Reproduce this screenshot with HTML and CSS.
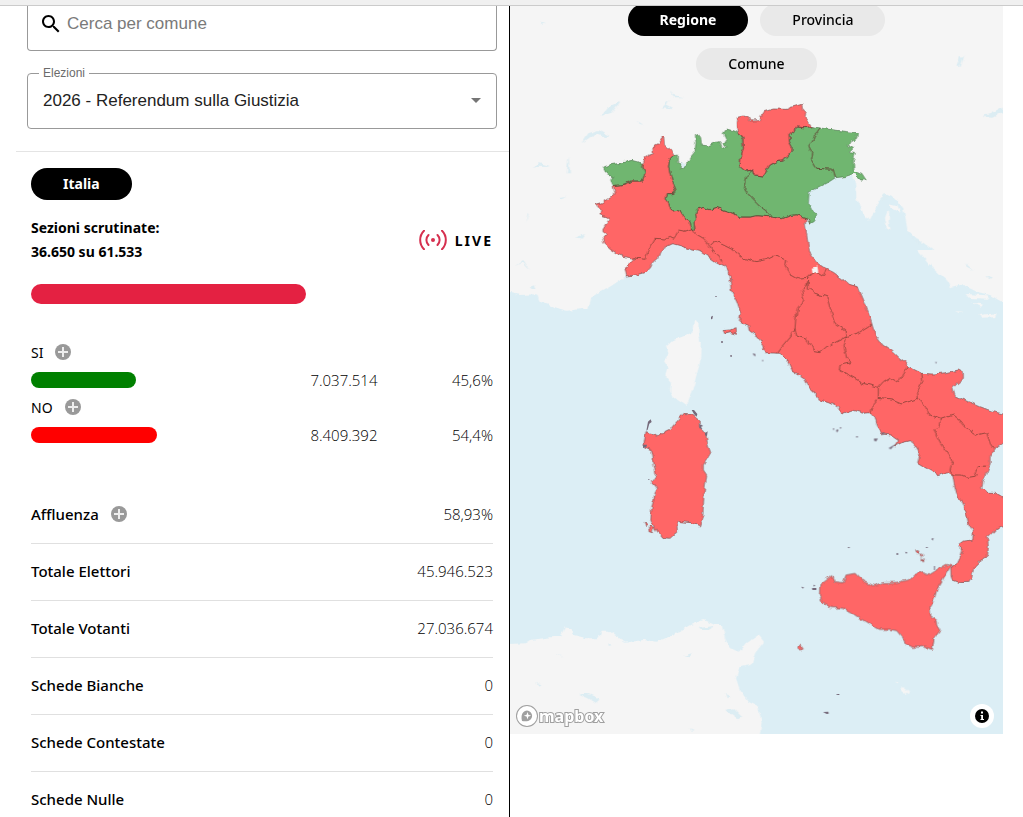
FILE: index.html
```html
<!DOCTYPE html>
<html lang="it">
<head>
  <meta charset="UTF-8">
  <meta name="viewport" content="width=device-width, initial-scale=1">
  <title>Referendum sulla Giustizia</title>
  <link rel="stylesheet" href="styles.css">
</head>
<body>
  <div class="topbar"></div>

  <main class="layout">
    <!-- Left: filters and results -->
    <section class="panel">
      <form class="filters">
        <div class="search">
          <svg class="search-icon" viewBox="0 0 24 24" aria-hidden="true">
            <path d="M15.5 14h-.79l-.28-.27C15.41 12.59 16 11.11 16 9.5 16 5.91 13.09 3 9.5 3S3 5.91 3 9.5 5.91 16 9.5 16c1.61 0 3.09-.59 4.23-1.57l.27.28v.79l5 4.99L20.49 19l-4.99-5zm-6 0C7.01 14 5 11.99 5 9.5S7.01 5 9.5 5 14 7.01 14 9.5 11.99 14 9.5 14z"/>
          </svg>
          <input type="text" placeholder="Cerca per comune" aria-label="Cerca per comune">
        </div>
        <fieldset class="select-box">
          <legend><label for="elezioni">Elezioni</label></legend>
          <select id="elezioni">
            <option>2026 - Referendum sulla Giustizia</option>
          </select>
          <svg class="arrow" viewBox="0 0 24 24" aria-hidden="true"><path d="M7 10l5 5 5-5z"/></svg>
        </fieldset>
      </form>

      <div class="results">
        <button type="button" class="pill active area">Italia</button>

        <div class="status">
          <p class="sections">Sezioni scrutinate:<br>36.650 su 61.533</p>
          <p class="live">
            <svg viewBox="0 0 28 20" aria-hidden="true">
              <circle cx="14" cy="10" r="2"/>
              <path d="M9.500 5a7 7 0 0 0 0 10M18.500 5a7 7 0 0 1 0 10M5 .8a13 13 0 0 0 0 18.400M23 .8a13 13 0 0 1 0 18.400"/>
            </svg>
            LIVE
          </p>
        </div>
        <div class="progress"><div class="progress-fill" style="width: 59.56%"></div></div>

        <div class="votes">
          <div class="vote">
            <div class="vote-name">SI
              <button type="button" class="plus" aria-label="Dettagli SI"><svg viewBox="0 0 16 16"><path d="M8 3v10M3 8h10"/></svg></button>
            </div>
            <div class="vote-row">
              <div><div class="bar yes" style="width: 45.6%"></div></div>
              <span class="number">7.037.514</span>
              <span class="number">45,6%</span>
            </div>
          </div>
          <div class="vote">
            <div class="vote-name">NO
              <button type="button" class="plus" aria-label="Dettagli NO"><svg viewBox="0 0 16 16"><path d="M8 3v10M3 8h10"/></svg></button>
            </div>
            <div class="vote-row">
              <div><div class="bar no" style="width: 54.4%"></div></div>
              <span class="number">8.409.392</span>
              <span class="number">54,4%</span>
            </div>
          </div>
        </div>

        <table class="totals">
          <tr>
            <th scope="row"><div class="with-plus">Affluenza
              <button type="button" class="plus" aria-label="Dettagli affluenza"><svg viewBox="0 0 16 16"><path d="M8 3v10M3 8h10"/></svg></button></div>
            </th>
            <td>58,93%</td>
          </tr>
          <tr><th scope="row">Totale Elettori</th><td>45.946.523</td></tr>
          <tr><th scope="row">Totale Votanti</th><td>27.036.674</td></tr>
          <tr><th scope="row">Schede Bianche</th><td>0</td></tr>
          <tr><th scope="row">Schede Contestate</th><td>0</td></tr>
          <tr><th scope="row">Schede Nulle</th><td>0</td></tr>
        </table>
      </div>
    </section>

    <!-- Right: map -->
    <section class="map-column">
      <div class="map">
        <svg class="italy" viewBox="-240 -267 1479 2184" role="img" aria-label="Mappa dei risultati per regione">
          <defs>
            <!-- roughens the coast lines -->
            <filter id="rough" filterUnits="userSpaceOnUse" x="-260" y="-290" width="1520" height="2230" color-interpolation-filters="sRGB">
              <feTurbulence type="fractalNoise" baseFrequency="0.05" numOctaves="2" seed="4" result="n"/>
              <feDisplacementMap in="SourceGraphic" in2="n" scale="15" xChannelSelector="R" yChannelSelector="G"/>
            </filter>
          </defs>
          <rect class="sea" x="-240" y="-267" width="1479" height="2184"/>

          <g filter="url(#rough)">
            <!-- Europe, Balkans, Africa, Corsica -->
            <g class="land">
              <path transform="translate(-240 255)" d="M-20-600V335L30 345 80 343 90 365 130 380 170 392 235 385 245 350 300 320 345 290 480 120 900-50 1200-600Z"/>
              <path transform="translate(690 165)" d="M-100 50 50 85 100 78 105 100 110 150 130 190 150 212 165 180 175 155 190 130 225 145 250 175 258 210 262 240 290 265 340 300 295 300 330 345 380 390 390 415 430 405 470 425 510 435 570 470V-480H-100ZM203 180 208 190 206 215 212 240 200 232 195 200ZM208 160 232 166 242 188 215 176ZM440 432 500 436 505 446 450 444ZM455 458 490 464 480 470ZM475 495 530 490 525 502 485 503ZM405 484 430 485 420 490Z"/>
              <path transform="translate(-240 1485)" d="M-20 163 45 160 60 150 120 142 150 140 165 112 188 122 190 135 230 145 265 145 275 125 300 125 330 145 345 158 400 150 440 155 490 135 540 105 580 90 615 105 635 105 645 145 660 175 690 185 710 160 745 135 762 155 735 190 725 225 690 232 678 265 690 300 715 335 745 350 755 400 745 460H-20Z"/>
              <path transform="translate(-240 555)" d="M555 118 565 130 565 165 572 185 570 250 558 290 545 340 530 378 490 350 480 330 483 310 468 290 475 265 460 240 475 220 468 200 490 180 530 165 550 155Z"/>
              <path transform="translate(570 1515)" d="M360 262 372 262 388 275 374 282ZM347 245 356 250 350 253Z"/>
            </g>
            <!-- lakes and rivers -->
            <g class="water">
              <path transform="translate(-240 -285)" d="M272 348 290 325 330 305 305 338ZM215 430 235 400 265 390 298 408 290 414 260 402 240 412ZM455 325 478 300 470 318 488 328ZM480 270 492 286 522 292 490 292ZM1418 348 1440 342 1478 320V335L1450 350ZM1340 200 1350 168 1362 170 1352 200ZM65 500 90 490 120 498 90 497ZM170 520 176 470 180 520ZM510 485 525 488 535 505 515 505ZM380 362 400 374 390 372ZM92 65 106 68 98 76ZM1110 590 1125 580 1140 592 1120 600Z"/>
              <path transform="translate(-240 1485)" d="M205 312 235 312 265 325 260 340 235 325ZM645 360 670 355 695 380 685 388ZM520 198 545 190 540 202ZM570 114 608 108 600 120 575 120ZM130 192 165 200 140 196ZM80 275 95 286 86 290ZM645 312 662 320 650 328ZM540 415 555 422 545 425ZM298 160 308 165 300 168Z"/>
              <path transform="translate(-240 255)" d="M195 172 225 162 215 176ZM45 130 55 95 57 100ZM15 258 40 240 60 272 38 246ZM140 55 170 50 150 58ZM60 320 72 316 76 330 64 330Z"/>
              <path transform="translate(690 165)" d="M435 340 460 360 440 350ZM500 378 515 382 508 388ZM262 250 290 275 340 298 285 268Z"/>
            </g>

            <!-- Peninsula -->
            <path class="region red" d="M160 205 164 190 174 182 190 176 188 156 204 148 210 136 218 125 224 126 226 150 240 162 252 182 238 196 236 215 242 240 248 262 258 285 252 295 244 297 232 296 228 310 238 330 245 348 262 346 275 352 285 372 300 380 306 404 314 402 312 380 318 370 316 355 322 342 340 337 360 344 380 337 400 345 430 354 450 366 480 366 500 362 520 363 545 366 576 371 600 362 620 359 640 365 648 368 646 390 650 420 655 455 662 480 680 503 705 520 730 532 755 550 775 568 805 577 812 595 825 625 835 655 845 685 855 720 875 747 905 767 930 790 945 800 952 813 975 825 995 835 1030 837 1070 833 1105 825 1120 833 1120 850 1100 867 1088 880 1095 903 1130 917 1170 935 1210 950 1260 962 1260 1035 1239 1045 1215 1060 1200 1085 1200 1110 1190 1135 1178 1160 1175 1180 1190 1192 1215 1192 1239 1207 1260 1215 1260 1285 1239 1295 1210 1307 1192 1325 1195 1355 1192 1385 1170 1400 1150 1420 1145 1445 1135 1462 1110 1463 1088 1455 1083 1440 1082 1417 1100 1410 1112 1385 1118 1365 1103 1350 1120 1338 1148 1335 1150 1310 1135 1285 1128 1250 1115 1215 1100 1195 1092 1165 1088 1140 1072 1130 1045 1142 1025 1127 1000 1113 983 1103 990 1075 975 1050 962 1037 935 1043 915 1053 927 1035 905 1020 875 1017 865 995 855 970 840 953 820 955 785 945 755 957 742 935 715 923 695 917 675 895 652 873 640 850 608 830 595 800 570 775 525 773 517 765 522 750 500 723 478 707 475 690 448 683 452 655 440 620 423 585 420 545 405 515 375 500 350 483 330 470 300 463 270 452 248 446 225 457 212 470 205 490 188 505 180 520 165 533 140 540 110 543 105 525 120 505 135 490 110 487 85 478 60 462 42 448 38 430 48 418 38 405 50 385 58 372 50 365 30 360 32 345 18 328 40 322 62 308 75 298 72 285 70 272 100 268 125 258 158 258 165 235 158 215Z"/>
            <!-- Valle d'Aosta -->
            <path class="region green" d="M40 215 68 208 90 205 125 196 140 200 160 205 158 215 165 235 158 258 125 258 100 268 70 272 62 255 68 245 52 240Z"/>
            <!-- Lombardia -->
            <path class="region green" d="M252 182 262 180 262 200 272 205 270 225 282 220 292 205 300 188 315 170 318 140 316 122 325 118 332 128 334 150 355 153 375 142 392 140 400 160 410 158 402 148 410 135 400 115 410 102 430 108 445 115 458 125 460 160 452 190 450 215 458 225 470 228 490 225 470 245 464 280 480 305 505 330 540 358 545 366 520 363 500 362 480 366 450 366 430 354 400 345 380 337 360 344 340 337 322 342 316 355 318 370 312 380 314 402 306 404 300 380 285 372 275 352 262 346 245 348 238 330 228 310 232 296 244 297 252 295 258 285 248 262 242 240 236 215 238 196Z"/>
            <!-- Veneto -->
            <path class="region green" d="M490 225 493 240 522 243 530 225 540 210 560 200 580 198 605 170 606 155 598 140 597 118 622 96 640 98 665 95 692 99 685 110 675 120 670 135 657 155 668 175 665 195 680 220 720 222 730 228 736 248 710 265 680 280 657 292 655 325 665 345 680 358 672 380 662 385 652 370 620 359 600 362 576 371 545 366 540 358 505 330 480 305 464 280 470 245Z"/>
            <!-- Friuli Venezia Giulia -->
            <path class="region green" d="M692 99 730 105 770 110 802 113 800 130 770 150 790 160 780 170 796 172 790 200 792 228 815 235 828 255 815 255 795 235 765 245 736 248 730 228 720 222 680 220 665 195 668 175 657 155 670 135 675 120 685 110Z"/>
            <!-- Trentino Alto Adige -->
            <path class="region red" d="M443 98 442 80 445 67 462 63 475 68 480 78 510 77 515 60 522 50 550 42 590 43 600 38 635 28 637 40 648 52 645 65 652 80 663 95 640 98 622 96 597 118 598 140 606 155 605 170 580 198 560 200 540 210 530 225 522 243 493 240 490 225 465 228 450 215 452 190 460 160 458 125 445 115Z"/>

            <!-- Regional borders -->
            <path class="border" d="M130 488 165 493 175 465 195 430 225 432 240 424 252 430 265 408 285 412 306 404 320 418 340 430 355 445 365 465 385 480 395 500M362 450 375 438 400 450 430 465 460 490 500 500 530 493 555 480 590 495 585 515 600 538 625 552 655 550 650 545 680 530 700 542 708 525"/>
            <path class="border" d="M160 205 158 215 165 235 158 258 125 258 100 268 70 272M252 182 238 196 236 215 242 240 248 262 258 285 252 295 232 296 228 310 238 330 245 348 262 346 275 352 285 372 300 380 306 404 314 402 312 380 318 370 316 355 322 342 340 337 360 344 380 337 400 345 430 354 450 366 480 366 500 362 545 366 576 371 600 362 620 359 652 370 662 385M545 366 540 358 505 330 480 305 464 280 470 245 490 225 493 240 522 243 530 225 540 210 560 200 580 198 605 170 606 155 598 140 597 118 622 96 640 98 663 95M490 225 465 228 450 215 452 190 460 160 458 125 445 115M692 99 685 110 675 120 670 135 657 155 668 175 665 195 680 220 720 222 730 228 736 248"/>
            <path class="border" transform="translate(330 405)" d="M325 150 318 170 305 185 312 210 292 235 287 270 285 295 270 320 245 350 230 370M325 150 325 175 345 190 380 200 392 240 405 280 435 300 440 320 470 310 515 282M285 295 290 318 320 328 345 362 362 365 380 350 440 320 432 350 440 385 455 398 420 405 418 420 455 440 490 460 535 472 550 455 570 442 595 458 625 410M535 472 535 505 522 520 512 548M535 505 575 510 605 522 655 505 652 480 668 455 665 430M655 505 680 535 690 555 722 568 760 555 780 570 800 595 830 615 860 608 870 640 882 658M722 568 715 595 702 602 725 645 758 690 750 720 760 735 785 735 805 745 825 742 835 710 858 708"/>
            <path class="land" d="M665 518 682 514 685 530 668 534Z"/>

            <!-- Sardegna -->
            <path class="region red" transform="translate(-240 555)" d="M522 400 550 405 570 420 572 445 588 465 592 490 602 518 580 555 580 570 590 585 582 640 578 710 568 738 540 728 510 725 500 735 502 755 480 775 455 772 432 740 422 720 425 685 435 640 442 625 425 605 438 585 430 540 425 510 402 500 403 480 408 455 445 467 480 450 500 425ZM403 727 413 730 408 740ZM418 738 432 742 430 758 420 755ZM640 152 660 150 678 143 680 163 662 158 645 162Z"/>
            <!-- Sicilia -->
            <path class="region red" transform="translate(570 1095)" d="M118 405 120 375 140 360 155 347 163 365 190 368 198 345 225 340 240 355 255 365 280 377 310 368 350 367 385 360 405 342 425 335 450 343 480 325 500 313 512 318 490 355 470 390 462 420 450 440 452 468 468 478 470 495 480 512 462 535 457 568 430 560 400 562 378 552 365 530 350 512 330 508 295 508 265 490 240 475 210 455 190 445 150 442 125 425ZM53 558 62 556 70 568 66 573 56 567ZM407 273 415 272 418 279 410 280ZM421 282 428 284 427 293 421 290ZM426 298 433 300 431 305 427 304Z"/>
          </g>

          <!-- Minor islands -->
          <g class="islet">
            <path transform="translate(-240 555)" d="M603 110l6-3-2 10-4 1ZM633 184h6v4h-6ZM661 225l5 1-1 5-4-1ZM616 48h4v3h-4ZM545 390h7l10 12-2 8-8-8ZM568 432l12 6-8 2 6 8-10-4ZM585 460l8-6-2 14-6-2ZM414 425l8-7 3 8-7 5-5 18-4 3ZM399 494h12l-2 8-10 2ZM415 597h3v3h-3Z"/>
            <path transform="translate(330 405)" d="M158 370l8 2 1 6-6-2ZM186 390h4v3h-4ZM705 396h6l-3 5ZM410 598l6 2-4 6-4-2ZM418 592l8 0-5 4ZM468 619h6v3h-6ZM398 596h5v3h-5ZM522 626l12 0-6 8-6-2ZM565 655l20-12-12 14ZM545 608l10 0-8 8Z"/>
            <path transform="translate(570 1095)" d="M202 261h8l-3 4ZM349 280h6v4h-6ZM375 275l7 2-3 5ZM454 236l7-2-3 8ZM438 261h5v3h-5ZM64 380l8 2-4 4ZM96 384h13v6h-12ZM100 374l6 2-4 4ZM462 318h3v12h-3ZM170 702h8v3h-8ZM129 756l16-1 1 6-6 1Z"/>
          </g>
        </svg>

        <div class="levels">
          <button type="button" class="pill active">Regione</button>
          <button type="button" class="pill">Provincia</button>
          <button type="button" class="pill">Comune</button>
        </div>

        <a class="mapbox" href="https://www.mapbox.com/">
          <svg viewBox="0 0 22 22" aria-hidden="true">
            <circle class="ring" cx="11" cy="11" r="10"/>
            <path class="pin" d="M6 16c-1-4-.4-7 1.300-8.800a5 5 0 0 1 7.300 0 5 5 0 0 1 0 7.200C12.800 16 10 16.800 6 16Z"/>
            <path class="star" d="M11.500 7l.9 2.800 2.800.9-2.800.9-.9 2.800-.9-2.800-2.800-.9 2.800-.9Z"/>
          </svg>
          <span>mapbox</span>
        </a>
        <button type="button" class="info" aria-label="Informazioni sulla mappa">
          <svg viewBox="0 0 24 24"><circle cx="12" cy="12" r="7"/><path d="M11 7.500h2v2h-2ZM10.500 11H13v4h1v1h-3.500v-1h.7v-3h-.7Z"/></svg>
        </button>
      </div>
    </section>
  </main>
</body>
</html>
```

FILE: styles.css
```css
/* Reset defaults */
* { margin: 0; padding: 0; box-sizing: border-box; }

body {
  display: flex;
  flex-direction: column;
  height: 100vh;
  background: #fff;
  color: #000;
  font-family: "Noto Sans", "Open Sans", sans-serif;
  font-size: 14px;
  overflow: hidden;
}
button {
  border: none;
  font: inherit;
  color: inherit;
  cursor: pointer;
}

.topbar {
  flex: none;
  height: 6px;
  background: #f0f0f0;
  border-bottom: 1px solid #cbcbcb;
}

/* Page layout */
.layout {
  flex: 1;
  min-height: 0;
  display: grid;
  grid-template-columns: 1fr 1fr;
  padding-right: 3px;
}
.panel {
  border-right: 1px solid #000;
  overflow: hidden;
}
.map-column { padding-right: 17px; }

/* Filters */
.filters {
  display: flex;
  flex-direction: column;
  gap: 15px;
  margin-left: 16px;
  padding: 0 12px 22px 11px;
  border-bottom: 1px solid #e4e4e4;
  font-family: "Liberation Sans", Arial, sans-serif;
}
.search {
  display: flex;
  align-items: center;
  gap: 4px;
  height: 45px;
  padding: 0 12px 8px 11px;
  border: 1px solid #999;
  border-top: none;
  border-radius: 0 0 4px 4px;
}
.search-icon { width: 24px; height: 24px; }
.search input {
  flex: 1;
  min-width: 0;
  border: none;
  outline: none;
  font: 17px "Liberation Sans", Arial, sans-serif;
}
.search input::placeholder { color: #7a7a7a; }
.select-box {
  position: relative;
  min-width: 0;
  border: 1px solid #999;
  border-radius: 4px;
  padding: 0 8px 8px;
}
.select-box legend {
  padding: 0 4px;
  margin-left: 3px;
  font-size: 12px;
  line-height: 14px;
  color: #6b6b6b;
}
.select-box select {
  display: block;
  width: 100%;
  height: 40px;
  padding: 0 24px 0 7px;
  appearance: none;
  border: none;
  background: none;
  color: #222;
  font: 17px "Liberation Sans", Arial, sans-serif;
}
.arrow {
  position: absolute;
  right: 8px;
  top: 8px;
  width: 24px;
  height: 24px;
  fill: #757575;
  pointer-events: none;
}

/* Results */
.results { padding: 16px 16px 0 31px; }
.pill {
  height: 32px;
  padding: 0 32px 2px;
  border-radius: 16px;
  background: #e9e9e9;
  font-weight: 500;
}
.pill.active {
  background: #000;
  color: #fff;
  font-weight: 700;
}
.status {
  display: flex;
  justify-content: space-between;
  align-items: center;
  margin-top: 16px;
}
.sections {
  font-weight: 700;
  line-height: 24px;
}
.live {
  display: flex;
  align-items: center;
  gap: 8px;
  font-weight: 700;
  letter-spacing: 2px;
}
.live svg {
  width: 28px;
  height: 20px;
  fill: none;
  stroke: #d6304f;
  stroke-width: 2;
  stroke-linecap: round;
}
.live circle { fill: #d6304f; stroke: none; }
.progress { margin-top: 20px; }
.progress-fill {
  height: 20px;
  border-radius: 10px;
  background: #e42142;
}

.votes { margin-top: 36px; }
.vote-name,
.with-plus {
  display: flex;
  align-items: center;
  gap: 12px;
}
.vote-name { height: 24px; }
.plus {
  width: 16px;
  height: 16px;
  border-radius: 50%;
  background: #999;
}
.plus svg {
  display: block;
  fill: none;
  stroke: #eee;
  stroke-width: 2;
}
.vote-row {
  display: grid;
  grid-template-columns: 2fr 1fr 1fr;
  align-items: center;
  height: 31px;
}
.bar {
  height: 16px;
  border-radius: 8px;
}
.bar.yes { background: #008000; }
.bar.no { background: #f00; }
.number,
.totals td {
  font-family: "Open Sans", "Noto Sans", sans-serif;
  font-size: 15px;
  font-weight: 300;
  text-align: right;
}

.totals {
  width: 100%;
  margin-top: 36px;
  border-collapse: collapse;
}
.totals tr { border-bottom: 1px solid #e0e0e0; }
.totals th,
.totals td {
  height: 57px;
  padding-bottom: 1px;
}
.totals th {
  font-size: 15px;
  font-weight: 500;
  text-align: left;
}

/* Map */
.map {
  position: relative;
  overflow: hidden;
}
.italy { display: block; width: 100%; }
.sea { fill: #dceef5; }
.land { fill: #f5f5f5; }
.water { fill: #dcedf3; }
.region {
  stroke: #7a4b4b;
  stroke-width: 2;
  stroke-linejoin: round;
}
.red { fill: #ff6666; }
.green { fill: #70b670; stroke: #4d7a4d; }
.border {
  fill: none;
  stroke: #6b3a2c;
  stroke-width: 2;
}
.islet { fill: #75697a; }

/* Map overlays */
.levels {
  position: absolute;
  top: -2px;
  left: 0;
  right: 0;
  display: flex;
  flex-wrap: wrap;
  justify-content: center;
  gap: 12px;
  padding: 0 96px;
}
.mapbox {
  position: absolute;
  left: 6px;
  bottom: 7px;
  display: flex;
  align-items: center;
  gap: 1px;
  color: #fff;
  font-weight: 700;
  font-size: 16px;
  line-height: 22px;
  text-decoration: none;
  paint-order: stroke fill;
  -webkit-text-stroke: 2px #a0a0a0;
}
.mapbox svg { width: 22px; height: 22px; }
.ring { fill: #fff; stroke: #a0a0a0; stroke-width: 2; }
.pin { fill: #a0a0a0; }
.star { fill: #fff; }
.info {
  position: absolute;
  right: 9px;
  bottom: 6px;
  width: 24px;
  height: 24px;
  border-radius: 50%;
  background: #fff;
}
.info svg { display: block; }
.info path { fill: #fff; }
```
